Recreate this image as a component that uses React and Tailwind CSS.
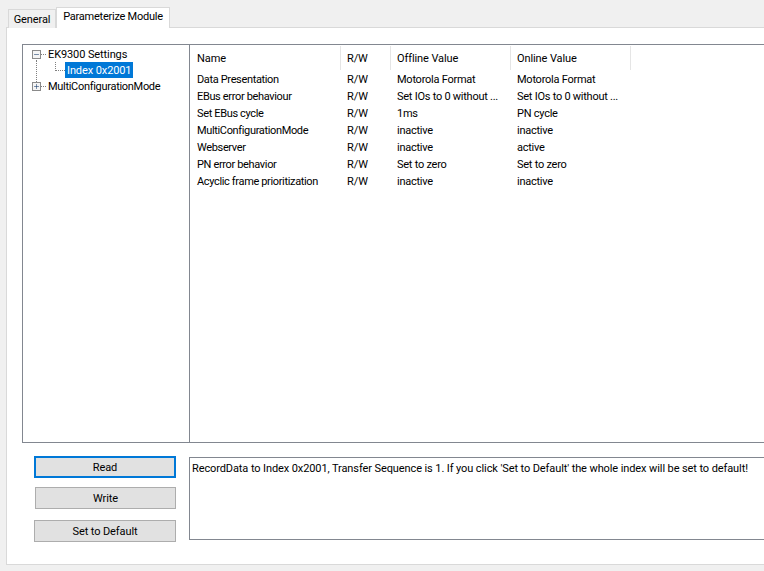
import { Minus, Plus } from "lucide-react";

const rows = [
  ["Data Presentation", "R/W", "Motorola Format", "Motorola Format"],
  ["EBus error behaviour", "R/W", "Set IOs to 0 without ...", "Set IOs to 0 without ..."],
  ["Set EBus cycle", "R/W", "1ms", "PN cycle"],
  ["MultiConfigurationMode", "R/W", "inactive", "inactive"],
  ["Webserver", "R/W", "inactive", "active"],
  ["PN error behavior", "R/W", "Set to zero", "Set to zero"],
  ["Acyclic frame prioritization", "R/W", "inactive", "inactive"],
];

function Expander({ Icon }) {
  return (
    <span className="flex h-[9px] w-[9px] shrink-0 items-center justify-center border border-[#8a8a8a] bg-[#f4f4f4] text-[#1c3f6e]">
      <Icon size={7} strokeWidth={2} />
    </span>
  );
}

function Tree() {
  return (
    <div className="relative w-[167px] shrink-0 whitespace-nowrap border-r border-[#828790] pl-[9px] pt-[1px] tracking-[-0.3px]">
      {/* dotted connectors */}
      <div className="absolute left-[13px] top-[15px] h-[22px] border-l border-dotted border-[#808080]" />
      <div className="flex h-[16px] items-center">
        <Expander Icon={Minus} />
        <span className="mr-[2px] w-[5px] border-t border-dotted border-[#808080]" />
        <span className="pt-[2px] tracking-[-0.1px]">EK9300 Settings</span>
      </div>
      <div className="flex h-[16px] items-center pl-[23px]">
        <span className="h-[9px] w-[10px] -translate-y-[4px] border-b border-l border-dotted border-[#808080]" />
        <span className="flex h-[16px] items-center bg-[#0078d7] px-[2px] pt-[2px] tracking-[-0.1px] text-white">Index 0x2001</span>
      </div>
      <div className="flex h-[16px] items-center">
        <Expander Icon={Plus} />
        <span className="mr-[2px] w-[5px] border-t border-dotted border-[#808080]" />
        <span className="pt-[2px]">MultiConfigurationMode</span>
      </div>
    </div>
  );
}

function Table() {
  return (
    <div className="min-w-0 flex-1 pt-[1px]">
      <div className="flex h-[24px] items-center">
        <div className="flex h-[24px] w-[151px] items-center border-r border-[#e5e5e5] pl-[7px] pt-[2px]">Name</div>
        <div className="flex h-[24px] w-[50px] items-center border-r border-[#e5e5e5] pl-[6px] pt-[2px]">R/W</div>
        <div className="flex h-[24px] w-[120px] items-center border-r border-[#e5e5e5] pl-[6px] pt-[2px]">Offline Value</div>
        <div className="flex h-[24px] w-[120px] items-center border-r border-[#e5e5e5] pl-[6px] pt-[2px]">Online Value</div>
      </div>
      <div>
        {rows.map((r) => (
          <div key={r[0]} className="flex h-[17px] items-center whitespace-nowrap pt-[2px] tracking-[-0.25px]">
            <div className="w-[151px] pl-[7px] tracking-[-0.35px]">{r[0]}</div>
            <div className="w-[50px] pl-[6px] tracking-normal">{r[1]}</div>
            <div className="w-[120px] pl-[6px]">{r[2]}</div>
            <div className="w-[120px] pl-[6px]">{r[3]}</div>
          </div>
        ))}
      </div>
    </div>
  );
}

export default function App() {
  return (
    <div className="h-[571px] w-[764px] overflow-hidden bg-[#f0f0f0] font-['Roboto',sans-serif] text-[11px] leading-[16px] tracking-[-0.1px] text-black">
      <div className="pl-[6px] pt-[7px]">
        {/* tabs */}
        <div className="relative z-10 -mb-px flex h-[21px] items-end whitespace-nowrap pl-[2px]">
          <div className="flex h-[19px] w-[48px] items-center justify-center border border-b-0 border-[#d9d9d9] bg-[#f0f0f0] pt-[2px]">
            General
          </div>
          <div className="flex h-[21px] w-[114px] items-center justify-center border border-b-0 border-[#d9d9d9] bg-white pb-[2px] tracking-[-0.25px]">
            Parameterize Module
          </div>
        </div>
        {/* tab page */}
        <div className="h-[538px] w-[800px] border border-[#d9d9d9] bg-white pl-[15px] pt-[16px]">
          <div className="flex h-[399px] w-[770px] border border-[#828790]">
            <Tree />
            <Table />
          </div>
          <div className="flex pl-[12px] pt-[13px]">
            <div className="flex w-[142px] shrink-0 flex-col">
              <button className="h-[22px] w-[142px] border-2 border-[#0078d7] bg-[#e1e1e1] pt-[2px]">Read</button>
              <button className="ml-[1px] mt-[9px] h-[22px] w-[141px] border border-[#adadad] bg-[#e1e1e1] pt-[2px]">Write</button>
              <button className="mt-[11px] h-[22px] w-[142px] border border-[#adadad] bg-[#e1e1e1] pt-[2px]">Set to Default</button>
            </div>
            <div className="ml-[13px] mt-[1px] h-[83px] w-[600px] shrink-0 whitespace-nowrap border border-[#828790] pl-[2px] pt-[3px]">
              RecordData to Index 0x2001, Transfer Sequence is 1. If you click 'Set to Default' the whole index will be set to default!
            </div>
          </div>
        </div>
      </div>
    </div>
  );
}
